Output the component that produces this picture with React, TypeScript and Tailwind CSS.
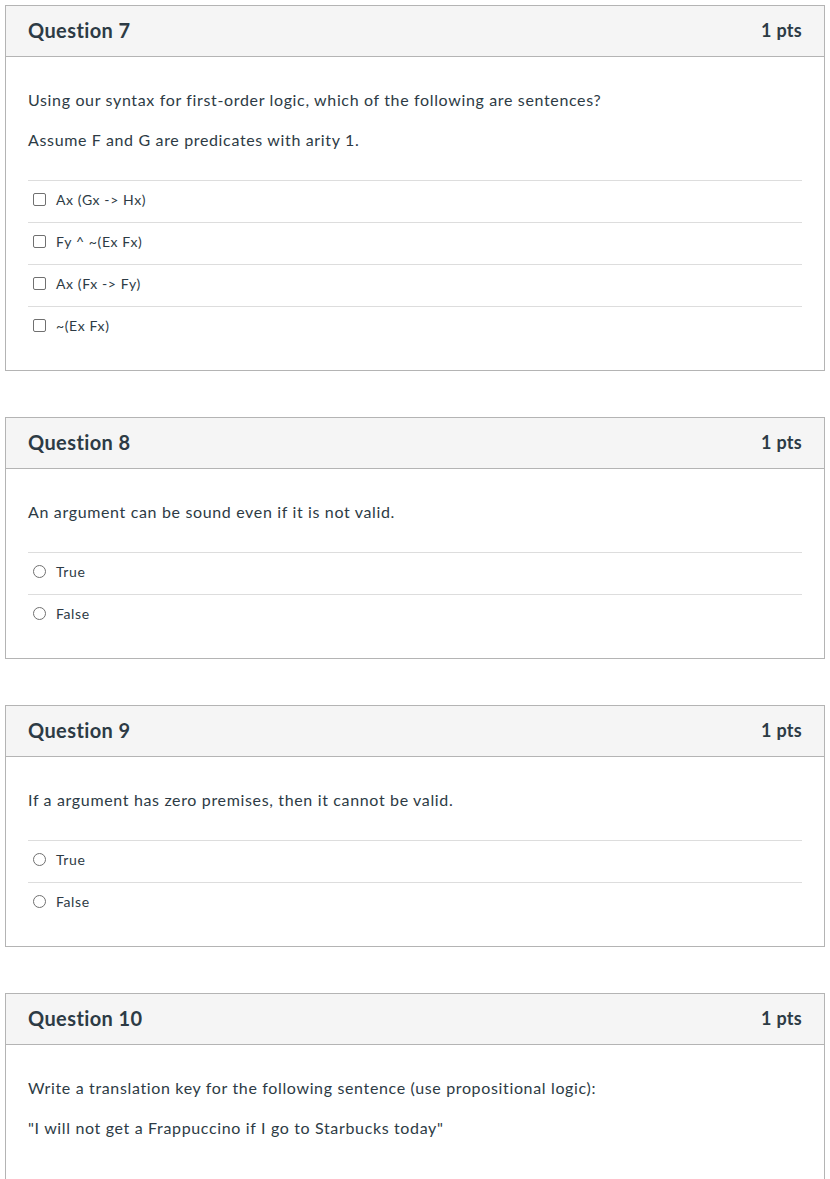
import React from "react";

type Q = {
  num: number;
  paras: string[];
  answers?: string[];
  kind?: "check" | "radio";
};

const questions: Q[] = [
  {
    num: 7,
    paras: [
      "Using our syntax for first-order logic, which of the following are sentences?",
      "Assume F and G are predicates with arity 1.",
    ],
    answers: ["Ax (Gx -> Hx)", "Fy ^ ~(Ex Fx)", "Ax (Fx -> Fy)", "~(Ex Fx)"],
    kind: "check",
  },
  {
    num: 8,
    paras: ["An argument can be sound even if it is not valid."],
    answers: ["True", "False"],
    kind: "radio",
  },
  {
    num: 9,
    paras: ["If a argument has zero premises, then it cannot be valid."],
    answers: ["True", "False"],
    kind: "radio",
  },
  {
    num: 10,
    paras: [
      "Write a translation key for the following sentence (use propositional logic):",
      "\"I will not get a Frappuccino if I go to Starbucks today\"",
    ],
  },
];

function Card({ q }: { q: Q }) {
  return (
    <div className="border border-[#b4b4b4] bg-white mb-[46px]">
      <div className="h-[51px] bg-[#f5f5f5] border-b border-[#b4b4b4] flex items-center justify-between px-[22px] pb-[2px]">
        <span className="text-[20px] font-bold tracking-[0.4px] text-[#2d3b45]">Question {q.num}</span>
        <span className="text-[18px] font-bold tracking-[0.3px] text-[#2d3b45]">1 pts</span>
      </div>
      <div className="flex flex-col px-[22px] pt-[31px] pb-[22px]">
        {q.paras.map((p, i) => (
          <p key={i} className="text-[16px] leading-6 mb-4 tracking-[0.65px] text-[#2d3b45]">
            {p}
          </p>
        ))}
        {q.answers && (
          <div className="mt-3 flex flex-col">
            {q.answers.map((a, i) => (
              <div
                key={i}
                className="h-[42px] border-t border-[#dddddd] flex items-center pl-[5px] pb-[4px]"
              >
                {q.kind === "check" ? (
                  <span className="w-[13px] h-[13px] border border-[#707070] rounded-[2px] bg-white" />
                ) : (
                  <span className="w-[13px] h-[13px] border border-[#707070] rounded-full bg-white" />
                )}
                <span className="ml-[10px] text-[14px] tracking-[0.6px] text-[#2d3b45]">{a}</span>
              </div>
            ))}
          </div>
        )}
        {!q.answers && <div className="h-[60px]" />}
      </div>
    </div>
  );
}

export default function App() {
  return (
    <div
      className="bg-white min-h-[1179px] pt-[5px] pl-[5px] w-[830px]"
      style={{ fontFamily: "Lato, 'Liberation Sans', sans-serif" }}
    >
      <div className="w-[820px]">
        {questions.map((q) => (
          <Card key={q.num} q={q} />
        ))}
      </div>
    </div>
  );
}
